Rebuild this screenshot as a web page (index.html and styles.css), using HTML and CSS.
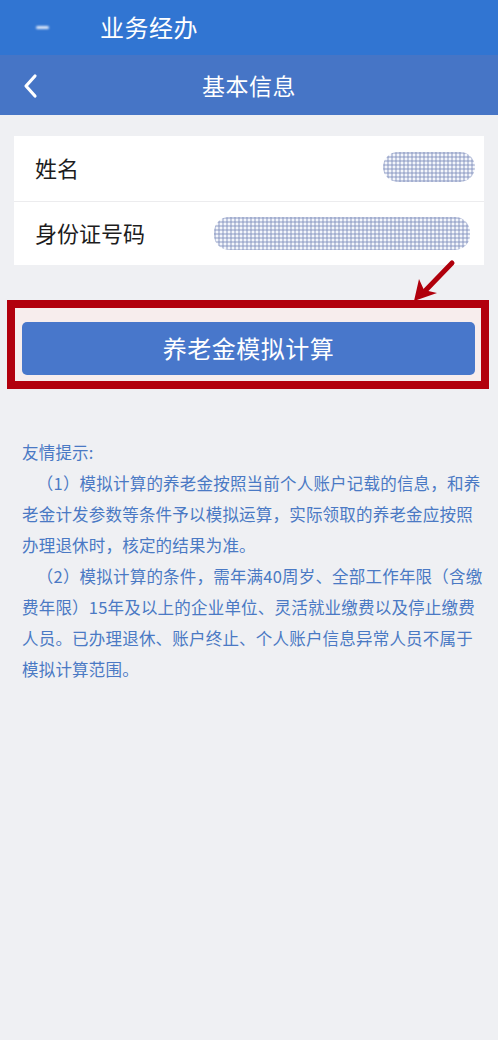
FILE: index.html
```html
<!DOCTYPE html>
<html lang="zh-CN">
<head>
<meta charset="utf-8">
<title>基本信息</title>
<link rel="stylesheet" href="styles.css">
</head>
<body>
<div class="page">
  <header class="topbar">
    <span class="dash"></span>
    <span class="top-title">业务经办</span>
  </header>
  <nav class="navbar">
    <svg class="back" width="16" height="26" viewBox="0 0 16 26"><path d="M13 3 L4 13 L13 23" fill="none" stroke="#fff" stroke-width="3.2" stroke-linecap="round" stroke-linejoin="round"/></svg>
    <span class="nav-title">基本信息</span>
  </nav>
  <section class="card">
    <div class="row">
      <span class="label">姓名</span>
      <span class="mask mask-name"></span>
    </div>
    <div class="row">
      <span class="label">身份证号码</span>
      <span class="mask mask-id"></span>
    </div>
  </section>
  <div class="action">
    <svg class="arrow" width="50" height="46" viewBox="0 0 50 46"><path d="M42 4 L14 33" stroke="#b0000c" stroke-width="5" stroke-linecap="round" fill="none"/><path d="M4 42 L9 20 L14 31 L27 34 Z" fill="#b0000c"/></svg>
    <div class="highlight">
      <button class="btn">养老金模拟计算</button>
    </div>
  </div>
  <section class="notes">
    <p class="note-title">友情提示:</p>
    <p class="note">（1）模拟计算的养老金按照当前个人账户记载的信息，和养<br>老金计发参数等条件予以模拟运算，实际领取的养老金应按照<br>办理退休时，核定的结果为准。</p>
    <p class="note">（2）模拟计算的条件，需年满40周岁、全部工作年限（含缴<br>费年限）15年及以上的企业单位、灵活就业缴费以及停止缴费<br>人员。已办理退休、账户终止、个人账户信息异常人员不属于<br>模拟计算范围。</p>
  </section>
</div>
</body>
</html>
```

FILE: styles.css
```css
* { box-sizing: border-box; }
html, body { margin: 0; padding: 0; }
body {
  background: #eff0f3;
  font-family: "Noto Sans CJK SC", "Noto Sans", sans-serif;
  width: 498px;
  height: 1040px;
  overflow: hidden;
}
.page { display: flex; flex-direction: column; }
.topbar {
  height: 55px;
  background: #3175d2;
  display: flex;
  align-items: center;
  padding-left: 36px;
  color: #fff;
}
.dash {
  width: 13px;
  height: 3px;
  background: #dfe8f8;
  border-radius: 2px;
  margin-right: 51px;
  margin-top: 0;
  filter: blur(1px);
}
.top-title { font-size: 24px; letter-spacing: 0.5px; margin-top: -2px; }
.navbar {
  height: 60px;
  background: #4675c6;
  display: flex;
  align-items: center;
  justify-content: center;
  position: relative;
  color: #fff;
}
.back { position: absolute; left: 22px; top: 18px; }
.nav-title { font-size: 23px; letter-spacing: 0.5px; }
.card {
  margin: 21px 14px 0 14px;
  background: #fff;
}
.row {
  height: 64.5px;
  display: flex;
  align-items: center;
  justify-content: space-between;
  padding: 0 12px 3px 21px;
}
.row + .row { border-top: 1px solid #ececee; }
.label { font-size: 22px; color: #1d1d1d; }
.mask {
  display: block;
  height: 30px;
  border-radius: 15px;
  background-color: #f4f6fb;
  background-image:
    linear-gradient(90deg, rgba(130,145,190,0.45) 50%, transparent 50%),
    linear-gradient(rgba(130,145,190,0.45) 50%, transparent 50%);
  background-size: 4px 4px;
  filter: blur(0.5px);
}
.mask-name { width: 92px; margin-right: -3px; }
.mask-id { width: 256px; height: 33px; margin-right: 2px; margin-top: 4px; }
.action {
  position: relative;
  padding: 35px 9px 0 7px;
}
.arrow { position: absolute; left: 410px; top: -6px; }
.highlight {
  border: 8px solid #b2000d;
  background: #f7eded;
  padding: 14px 6px 7px 7px;
  height: 89px;
}
.btn {
  display: block;
  width: 100%;
  height: 53px;
  border: none;
  border-radius: 5px;
  background: #4877cb;
  color: #fff;
  font-family: "Noto Sans CJK SC", "Noto Sans", sans-serif;
  font-size: 24px;
  letter-spacing: 0.5px;
  padding: 0 0 3px 0;
}
.notes {
  padding: 0 0 0 22px;
  margin-top: 48px;
  color: #4a79c4;
  font-size: 16.5px;
  line-height: 31px;
  letter-spacing: 0.2px;
}
.notes p { margin: 0; white-space: nowrap; }
.note { text-indent: 0.9em; }
```
